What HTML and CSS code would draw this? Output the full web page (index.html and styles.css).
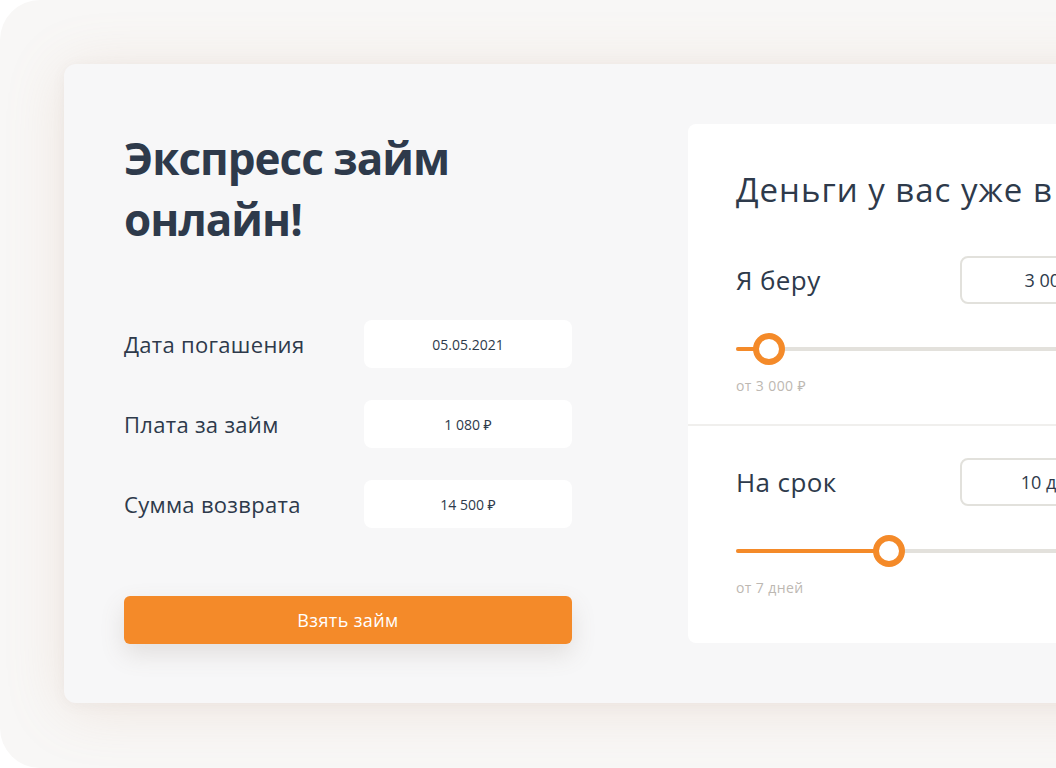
FILE: index.html
```html
<!DOCTYPE html>
<html lang="ru">
<head>
<meta charset="utf-8">
<title>Экспресс займ онлайн</title>
<link rel="stylesheet" href="styles.css">
</head>
<body>
<div class="stage">
  <div class="card">
    <div class="left">
      <h1 class="title">Экспресс займ<br>онлайн!</h1>
      <div class="rows">
        <div class="row"><span class="label">Дата погашения</span><span class="value">05.05.2021</span></div>
        <div class="row"><span class="label">Плата за займ</span><span class="value">1 080 ₽</span></div>
        <div class="row"><span class="label">Сумма возврата</span><span class="value">14 500 ₽</span></div>
      </div>
      <button class="cta">Взять займ</button>
    </div>
    <div class="panel">
      <h2 class="panel-title">Деньги у вас уже в течение 15 минут</h2>
      <div class="section first">
        <div class="field">
          <span class="field-label">Я беру</span>
          <span class="field-box">3 000 ₽</span>
        </div>
        <div class="slider">
          <div class="fill" style="width: 33px"></div>
          <div class="thumb" style="left: 17px"></div>
        </div>
        <div class="hint">от 3 000 ₽</div>
      </div>
      <div class="section second">
        <div class="field">
          <span class="field-label">На срок</span>
          <span class="field-box">10 дней</span>
        </div>
        <div class="slider">
          <div class="fill" style="width: 153px"></div>
          <div class="thumb" style="left: 137px"></div>
        </div>
        <div class="hint">от 7 дней</div>
      </div>
    </div>
  </div>
</div>
</body>
</html>
```
FILE: styles.css
```css
html, body {
  margin: 0;
  padding: 0;
  background: #ffffff;
  overflow: hidden;
  width: 1056px;
  height: 768px;
}
body {
  font-family: "Open Sans", "Noto Sans", sans-serif;
  color: #2e3a4b;
}
.stage {
  width: 1200px;
  height: 768px;
  box-sizing: border-box;
  background: #f8f7f6;
  border-radius: 40px;
  padding: 64px 0 0 64px;
}
.card {
  width: 1200px;
  height: 639px;
  box-sizing: border-box;
  background: #f7f7f8;
  border-radius: 12px;
  box-shadow: 0 6px 60px rgba(200, 150, 115, 0.18), 0 2px 14px rgba(120, 110, 100, 0.06);
  display: flex;
  padding: 60px 0 0 60px;
}
.left {
  width: 448px;
  display: flex;
  flex-direction: column;
}
.title {
  margin: 4px 0 0 0;
  font-size: 44px;
  line-height: 61px;
  font-weight: 700;
  letter-spacing: -1px;
  color: #2e3a4b;
}
.rows {
  margin-top: 70px;
  display: flex;
  flex-direction: column;
  gap: 32px;
}
.row {
  display: flex;
  align-items: center;
  justify-content: space-between;
  height: 48px;
}
.label {
  font-size: 22px;
  letter-spacing: 0.3px;
  color: #2e3a4b;
}
.value {
  width: 208px;
  height: 48px;
  background: #ffffff;
  border-radius: 8px;
  display: flex;
  align-items: center;
  justify-content: center;
  font-size: 14px;
  color: #2e3a4b;
}
.cta {
  margin-top: 68px;
  height: 48px;
  border: none;
  border-radius: 6px;
  background: #f48a29;
  color: #ffffff;
  font-family: inherit;
  font-size: 18px;
  letter-spacing: 0.4px;
  box-shadow: 0 10px 24px rgba(120, 100, 90, 0.16);
}
.panel {
  margin-left: 116px;
  width: 560px;
  height: 519px;
  background: #ffffff;
  border-radius: 8px;
  box-sizing: border-box;
  padding-top: 46px;
}
.panel-title {
  margin: 0;
  padding-left: 48px;
  font-size: 33px;
  line-height: 40px;
  font-weight: 400;
  letter-spacing: 1px;
  white-space: nowrap;
  color: #2e3a4b;
}
.section {
  padding-left: 48px;
}
.section.first {
  margin-top: 46px;
  padding-bottom: 28px;
  border-bottom: 2px solid #f0efed;
}
.section.second {
  padding-top: 32px;
}
.field {
  display: flex;
  align-items: center;
  height: 48px;
}
.field-label {
  width: 224px;
  font-size: 26px;
  letter-spacing: 0.4px;
}
.field-box {
  width: 190px;
  height: 48px;
  box-sizing: border-box;
  border: 2px solid #e2e1dc;
  border-radius: 8px;
  display: flex;
  align-items: center;
  justify-content: center;
  font-size: 18px;
  color: #2e3a4b;
}
.slider {
  position: relative;
  margin-top: 29px;
  height: 32px;
  width: 460px;
}
.slider::before {
  content: "";
  position: absolute;
  left: 0;
  right: 0;
  top: 14px;
  height: 4px;
  border-radius: 2px;
  background: #e3e1dc;
}
.fill {
  position: absolute;
  left: 0;
  top: 14px;
  height: 4px;
  border-radius: 2px;
  background: #f48a29;
}
.thumb {
  position: absolute;
  top: 0;
  width: 32px;
  height: 32px;
  box-sizing: border-box;
  border: 6px solid #f48a29;
  border-radius: 50%;
  background: #ffffff;
}
.hint {
  margin-top: 11px;
  font-size: 14px;
  line-height: 20px;
  letter-spacing: 0.4px;
  color: #bdb8b2;
}
```
